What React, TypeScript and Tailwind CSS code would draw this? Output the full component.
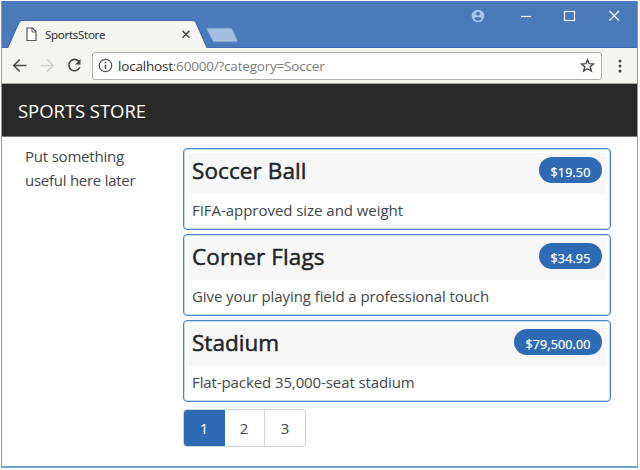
import React from "react";

interface Product {
  name: string;
  price: string;
  description: string;
  nameClass: string;
  descClass: string;
  priceClass: string;
}

const products: Product[] = [
  { name: "Soccer Ball", price: "$19.50", description: "FIFA-approved size and weight", nameClass: "tracking-[0.1px]", descClass: "tracking-[-0.04px]", priceClass: "w-[63px]" },
  { name: "Corner Flags", price: "$34.95", description: "Give your playing field a professional touch", nameClass: "tracking-[0.13px]", descClass: "tracking-[-0.08px]", priceClass: "w-[63px]" },
  { name: "Stadium", price: "$79,500.00", description: "Flat-packed 35,000-seat stadium", nameClass: "tracking-[0.03px]", descClass: "tracking-[-0.1px]", priceClass: "w-[88px]" },
];

function TitleBar() {
  return (
    <div className="relative h-[47px] shrink-0 bg-[#4a7aba]">
      <svg className="absolute left-0 top-0" width="634" height="47" viewBox="2 1 634 47" fill="none">
        <path d="M2 48H8L19.5 22.5Q20.3 21 22 21H193Q194.800 21 195.500 22.500L207 48Z" fill="#f4f5f0" />
        <path d="M7.500 48L19 22Q20 20.500 22 20.500H193Q195 20.500 196 22.500L207 48" stroke="#3b68aa" />
        <path d="M2 47.500H8M208 47.500H636" stroke="#3f69b4" />
        <path d="M207.500 28H230.500Q232 28 232.700 29.500L237.500 40.500Q238 42 236.500 42H214.500Q213 42 212.300 40.500L206.800 29.500Q206.500 28 207.500 28Z" fill="#a5bfe0" stroke="#5c8ac4" />
        <path d="M27 28H32.500L36 31.500V40.500H27Z" fill="#fff" stroke="#555" strokeWidth="1.200" />
        <path d="M32 28V32H36" stroke="#555" />
        <path d="M182.500 30.800L189.500 37.800M189.500 30.800L182.500 37.800" stroke="#454545" strokeWidth="1.500" />
        <circle cx="478" cy="16" r="6.300" fill="#a6c8f0" />
        <circle cx="478" cy="13.700" r="1.900" fill="#4a7aba" />
        <path d="M474 18.200Q478 15.800 482 18.200Q480.500 20.700 478 20.700Q475.500 20.700 474 18.200Z" fill="#4a7aba" />
        <path d="M521 16.500H531" stroke="#f4f8ff" strokeWidth="1.200" />
        <rect x="564.500" y="11.500" width="10" height="9" stroke="#f4f8ff" strokeWidth="1.200" />
        <path d="M609.500 11L619 20.500M619 11L609.500 20.500" stroke="#f4f8ff" strokeWidth="1.300" />
      </svg>
      <span className="relative ml-[43px] block w-fit whitespace-nowrap pt-[24px] text-[11.5px] leading-[19px] tracking-[-0.25px] text-[#333] [-webkit-text-stroke:0.15px]">SportsStore</span>
    </div>
  );
}

function AddressBar() {
  return (
    <div className="flex h-[36px] shrink-0 items-center border-b border-[#aaaaa8] bg-[#f4f5f0]">
      <svg className="shrink-0" width="90" height="35" viewBox="2 48 90 35" fill="none" strokeWidth="1.600">
        <path d="M26.500 65.500H14M19.700 59.500L13.800 65.500L19.700 71.500" stroke="#484848" />
        <path d="M40.500 65.500H53M47.300 59.500L53.200 65.500L47.300 71.500" stroke="#d0d1cd" />
        <path d="M79 61.500A5.700 5.700 0 1 0 79.800 67.300" stroke="#484848" />
        <path d="M80.500 59V64.500H75Z" fill="#484848" />
      </svg>
      <div className="flex h-[28px] w-[510px] shrink-0 items-center rounded-[3px] border border-[#b0b0a8] bg-white pl-[5px] pr-[6px]">
        <svg width="15" height="15" viewBox="0 0 15 15" fill="none">
          <circle cx="7.500" cy="7.500" r="6.200" stroke="#555" strokeWidth="1.300" />
          <path d="M7.500 6.700V11M7.500 3.800V5.300" stroke="#555" strokeWidth="1.600" />
        </svg>
        <span className="ml-[5px] whitespace-nowrap text-[13.500px] leading-[20px] tracking-[-0.2px] text-[#7c7c7c]"><span className="text-[#303030]">localhost</span>:60000/?category=Soccer</span>
        <svg className="ml-auto" width="15" height="15" viewBox="0 0 15 15" fill="none">
          <path d="M7.500 1.700L9.200 5.700L13.500 6L10.200 8.800L11.300 13L7.500 10.700L3.700 13L4.800 8.800L1.500 6L5.800 5.700Z" stroke="#484848" strokeWidth="1.400" />
        </svg>
      </div>
      <svg className="ml-[16px]" width="4" height="16" viewBox="0 0 4 16" fill="#484848">
        <circle cx="2" cy="3" r="1.500" /><circle cx="2" cy="8" r="1.500" /><circle cx="2" cy="13" r="1.500" />
      </svg>
    </div>
  );
}

function ProductCard({ product }: { product: Product }) {
  return (
    <article className="h-[82px] rounded-[4px] border-[1.500px] border-[#4784c8] px-[4px] pt-[4px] outline outline-1 outline-[#4784c8]/30 -outline-offset-[2px]">
      <div className="flex h-[41px] items-start justify-between bg-[#f7f7f7] pl-[4px] pr-[4px]">
        <h4 className={`mt-[3px] whitespace-nowrap text-[22.500px] leading-[30px] text-[#212529] [-webkit-text-stroke:0.5px] ${product.nameClass}`}>{product.name}</h4>
        <span className={`mt-[4px] h-[26px] rounded-full bg-[#2f6bb5] pt-[2px] text-center text-[12.500px] leading-[28px] tracking-[0.15px] text-white [-webkit-text-stroke:0.25px] ${product.priceClass}`}>{product.price}</span>
      </div>
      <p className={`mt-[4px] whitespace-nowrap pl-[4px] text-[15px] leading-[24px] text-[#41464a] ${product.descClass}`}>{product.description}</p>
    </article>
  );
}

function Pagination() {
  return (
    <nav className="mt-[7px] flex h-[38px] w-[123px] overflow-hidden rounded-[4px] border border-[#cfd1d4] text-[15px] leading-[37px]">
      <span className="-m-px w-[42px] bg-[#2f6bb5] text-center leading-[39px] text-white">1</span>
      <span className="flex-1 text-center text-[#41464a]">2</span>
      <span className="w-[41px] border-l border-[#cfd1d4] text-center text-[#41464a]">3</span>
    </nav>
  );
}

export default function App() {
  return (
    <div className="h-[470px] w-[640px] overflow-hidden bg-white pl-px pt-px font-['Open_Sans','Noto_Sans',sans-serif]">
      <main className="flex h-[467px] w-[637px] flex-col border-x border-b-2 border-[#6fa3d8] bg-white">
        <TitleBar />
        <AddressBar />
        <header className="h-[53px] shrink-0 border-b border-[#777] bg-[#292929] pl-[16px] text-[18.500px] leading-[54px] text-white">
          <span className="tracking-[-0.05px]">SPORTS STORE</span>
        </header>
        <div className="flex">
          <aside className="w-[181px] shrink-0 pl-[23px] pt-[8px] text-[15px] leading-[23.500px] tracking-[-0.2px] text-[#41464a]">
            <div>Put something</div>
            <div className="tracking-[-0.26px]">useful here later</div>
          </aside>
          <section className="w-[428px] pt-[11px]">
            <div className="flex flex-col gap-[4px]">
              {products.map((product) => <ProductCard key={product.name} product={product} />)}
            </div>
            <Pagination />
          </section>
        </div>
      </main>
    </div>
  );
}
